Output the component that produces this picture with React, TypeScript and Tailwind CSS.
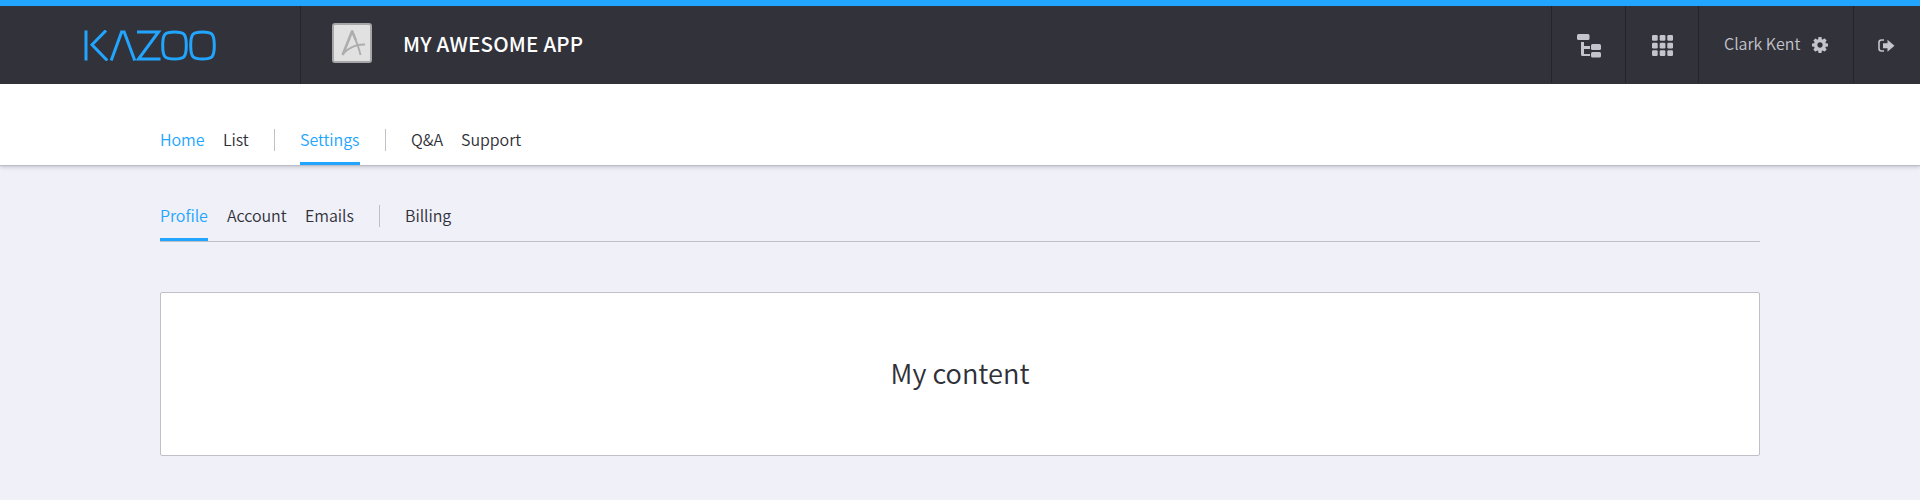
import React from 'react';

type Item = { label: string; width: string; active?: boolean; underlined?: boolean; divided?: boolean };

const mainTabs: Item[] = [
  { label: 'Home', width: 'w-[44px]', active: true },
  { label: 'List', width: 'w-[26px]' },
  { label: 'Settings', width: 'w-[60px]', active: true, underlined: true, divided: true },
  { label: 'Q&A', width: 'w-[31px]', divided: true },
  { label: 'Support', width: 'w-[60px]' },
];

const subTabs: Item[] = [
  { label: 'Profile', width: 'w-[48px]', active: true, underlined: true },
  { label: 'Account', width: 'w-[59px]' },
  { label: 'Emails', width: 'w-[49px]' },
  { label: 'Billing', width: 'w-[48px]', divided: true },
];

function Tabs({ items }: { items: Item[] }) {
  return (
    <nav className="flex h-[36px]">
      {items.map((t, i) => (
        <React.Fragment key={t.label}>
          {t.divided && <span className="ml-[25px] h-[22px] w-px bg-[#c0c0c9]" />}
          <a
            className={`${t.width} ${t.divided ? 'ml-[25px]' : i === 0 ? '' : 'ml-[19px]'} ${
              t.active ? 'text-[#22a5ff]' : 'text-[#2f3038]'
            } ${t.underlined ? 'border-b-3 border-[#22a5ff]' : ''} h-[36px] text-[16px] leading-[20px] font-[350] tracking-[-0.05px] whitespace-nowrap`}
          >
            {t.label}
          </a>
        </React.Fragment>
      ))}
    </nav>
  );
}

function Logo() {
  return (
    <svg className="ml-[84px] block" width="132" height="31" viewBox="0 0 132 31" fill="none" stroke="#22a5ff" strokeWidth="3">
      <path d="M2 .5V30.500M22 .5 8 14.800 23.300 30.500M27.200 30.500 37.600 2H40.200L50.800 30.500M53 2H74.500L54.500 29H76.500" />
      <path d="M90.500 2C100 2 102.300 3.500 102.300 15.500S100 29 90.500 29 78.700 27.500 78.700 15.500 81 2 90.500 2Z" />
      <path d="M118.500 2C128 2 130.300 3.500 130.300 15.500S128 29 118.500 29 106.700 27.500 106.700 15.500 109 2 118.500 2Z" />
    </svg>
  );
}

export default function App() {
  return (
    <div className="h-[500px] w-full overflow-hidden bg-[#f0f0f9] font-['Noto_Sans_CJK_SC','Noto_Sans',sans-serif] text-[#2f3038]">
      <header className="flex h-[84px] border-t-6 border-[#22a5ff] bg-[#32323a] text-[#c4c4cc]">
        <div className="flex h-[78px] w-[301px] items-start border-r border-[#24242b] pt-[24px]">
          <Logo />
        </div>
        <svg className="mt-[17px] ml-[31px]" width="40" height="40" viewBox="0 0 40 40" fill="none">
          <rect x="1" y="1" width="38" height="38" rx="2" fill="#e1e1e1" stroke="#a7a7a9" strokeWidth="2" />
          <path d="M11 31 20 8.500" stroke="#adadad" strokeWidth="2.600" strokeLinecap="round" />
          <path d="M20 8.500C23 15 27 25 28.500 32" stroke="#adadad" strokeWidth="1.800" />
          <path d="M19 8Q20 6.500 21.500 8L25 17 22.500 17 20 11Z" fill="#adadad" />
          <path d="M10.500 31C16 25.500 24 21 33 21.500" stroke="#adadad" strokeWidth="2" />
        </svg>
        <h1 className="mt-[23px] ml-[31px] text-[20.500px] leading-[28px] font-medium tracking-[0.2px] text-white">MY AWESOME APP</h1>
        <div className="ml-auto flex h-[77px]">
          <div className="w-[74px] border-l border-[#24242b] pt-[27px] pl-[25px]">
            <svg width="25" height="26" viewBox="0 0 25 26" fill="#c4c4cc">
              <rect x="0" y="1" width="12.500" height="6" rx="1.500" />
              <path d="M4 9h3v4h6v3H7v5h6v2H5.500Q4 23 4 21.500Z" />
              <rect x="14" y="11" width="10" height="6" rx="1.500" />
              <rect x="14" y="19" width="10" height="5.500" rx="1.500" />
            </svg>
          </div>
          <div className="w-[73px] border-l border-[#24242b] pt-[29px] pl-[26px]">
            <svg width="22" height="22" viewBox="0 0 22 22" fill="#c4c4cc">
              {[0, 7.7, 15.3].map((y) =>
                [0, 7.7, 15.3].map((x) => <rect key={`${x}-${y}`} x={x} y={y} width="5.700" height="5.700" rx="1.200" />),
              )}
            </svg>
          </div>
          <div className="flex w-[155px] border-l border-[#24242b] pt-[27px] pl-[25px]">
            <span className="w-[88px] text-[16px] leading-[20px] font-[350] whitespace-nowrap">Clark Kent</span>
            <svg className="mt-[4px]" width="16" height="16" viewBox="0 0 1536 1536" fill="#c4c4cc">
              <path d="M1024 768q0-106-75-181t-181-75-181 75-75 181 75 181 181 75 181-75 75-181zm512-109v222q0 12-8 23t-20 13l-185 28q-19 54-39 91 35 50 107 138 10 12 10 25t-9 23q-27 37-99 108t-94 71q-12 0-26-9l-138-108q-44 23-91 38-16 136-29 186-7 28-36 28H657q-14 0-24.500-8.500T621 1506l-28-184q-49-16-90-37l-141 107q-10 9-25 9-14 0-25-11-126-114-165-168-7-10-7-23 0-12 8-23 15-21 51-66.500t54-70.500q-27-50-41-99L29 913q-13-2-21-12.500T0 877V655q0-12 8-23t19-13l186-28q14-46 39-92-40-57-107-138-10-12-10-24 0-10 9-23 26-36 98.500-107.500T337 135q13 0 26 10l138 107q44-23 91-38 16-136 29-186 7-28 36-28h222q14 0 24.500 8.500T915 30l28 184q49 16 90 37l142-107q9-9 24-9 13 0 25 10 129 119 165 170 7 8 7 22 0 12-8 23-15 21-51 66.500t-54 70.500q26 50 41 98l183 28q13 2 21 12.500t8 23.500z" />
            </svg>
          </div>
          <div className="w-[67px] border-l border-[#24242b] pt-[33px] pl-[24px]">
            <svg width="17" height="14" viewBox="0 0 17 14" fill="none">
              <path d="M6 1H3.500Q1 1 1 3.500v6Q1 12 3.500 12H6" stroke="#c4c4cc" strokeWidth="1.600" />
              <path d="M5 4.200h4.500V.7L16.500 6.700 9.500 12.800V9.300H5Z" fill="#c4c4cc" />
            </svg>
          </div>
        </div>
      </header>
      <div className="h-[82px] border-b border-[#bdbdc9] bg-white pt-[45px] pl-[160px] shadow-[0_1px_4px_rgba(50,50,58,0.25)]">
        <Tabs items={mainTabs} />
      </div>
      <main className="px-[160px] pt-[39px]">
        <div className="h-[37px] border-b border-[#c0c0c9]">
          <Tabs items={subTabs} />
        </div>
        <section className="mt-[50px] flex h-[164px] items-center justify-center rounded-[2px] border border-[#c0c0c9] bg-white pb-[4px]">
          <h2 className="text-[27.200px] leading-[40px] font-[350]">My content</h2>
        </section>
      </main>
    </div>
  );
}
